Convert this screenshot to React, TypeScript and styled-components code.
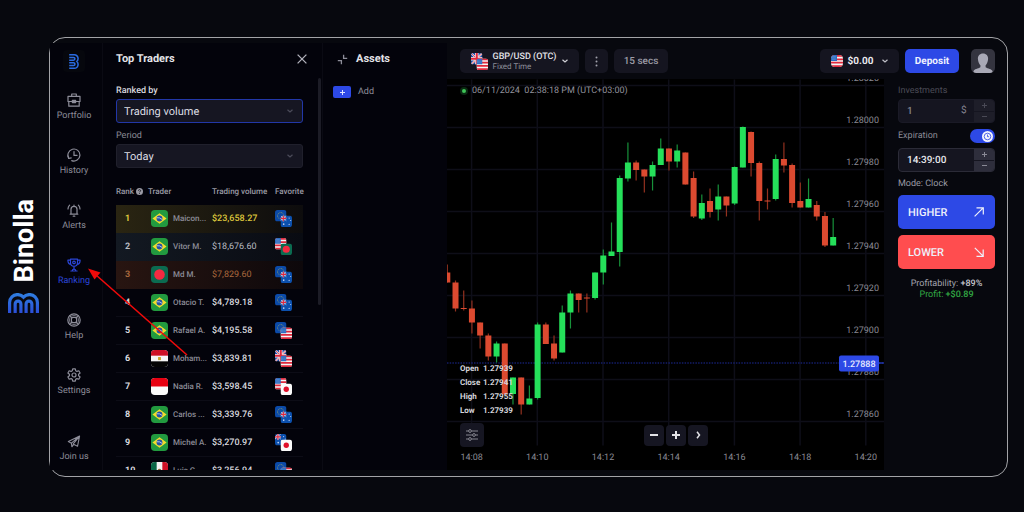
import React from 'react';
import styled, { createGlobalStyle, css } from 'styled-components';

const GlobalStyle = createGlobalStyle`
  * { box-sizing: border-box; }
  body {
    margin: 0;
    background: #07080e;
    color: #d9d9df;
    font-family: Roboto, "Liberation Sans", sans-serif;
    font-size: 9px;
    text-rendering: geometricPrecision;
  }
  button, input, select { font-family: inherit; margin: 0; text-rendering: inherit; }
  svg { display: block; }
`;

/* ---------- page frame ---------- */

const Page = styled.div`
  display: flex;
  height: 100vh;
  min-height: 400px;
  padding: 37px 16px 35px 0;
`;

const BrandRail = styled.aside`
  flex: none;
  width: 49px;
  display: flex;
  flex-direction: column;
  align-items: center;
  justify-content: center;
  gap: 10px;
  padding: 0 2px 2px 0;
`;

const BrandName = styled.div`
  writing-mode: vertical-rl;
  transform: rotate(180deg);
  font-size: 27px;
  line-height: 32px;
  font-weight: 700;
  color: #fff;
`;

const Frame = styled.div`
  position: relative;
  flex: 1;
  min-width: 0;
  display: flex;
  padding: 5px 0 6px;
  border: 1px solid #a2a3a7;
  border-radius: 16px;
`;

/* ---------- navigation ---------- */

const Nav = styled.nav`
  flex: none;
  width: 53px;
  display: flex;
  flex-direction: column;
  align-items: center;
  padding: 7px 4px 6px 0;
  border-right: 1px solid #0a0a13;
  background: #03030b;
`;

const LogoTile = styled.a`
  width: 22px;
  height: 22px;
  margin-bottom: 21px;
  display: grid;
  place-items: center;
  border-radius: 4px;
  background: #06070d;
`;

const NavLink = styled.a<{ $active?: boolean; $last?: boolean }>`
  display: flex;
  flex-direction: column;
  align-items: center;
  gap: 3px;
  height: 55px;
  color: ${(p) => (p.$active ? '#2b46d8' : '#8d8d99')};
  font-size: 9px;
  line-height: 13px;
  text-decoration: none;
  ${(p) => p.$last && css`margin-top: auto; height: 29px;`}
`;

/* ---------- traders panel ---------- */

const Traders = styled.section`
  flex: none;
  width: 220px;
  display: flex;
  flex-direction: column;
  background: #03030b;
  border-right: 1px solid #0a0a13;
`;

const PanelHead = styled.header`
  display: flex;
  align-items: center;
  justify-content: space-between;
  height: 32px;
  padding: 0 15px 0 13px;
`;

const PanelTitle = styled.h2`
  margin: 0;
  font-size: 11px;
  line-height: 16px;
  font-weight: 700;
  color: #e4e4e9;
`;

const IconButton = styled.button`
  display: grid;
  place-items: center;
  padding: 0;
  border: 0;
  background: none;
  color: #b2b2bb;
`;

const Scroller = styled.div`
  flex: 1;
  min-height: 0;
  display: flex;
  margin-top: 3px;
  overflow: hidden;
`;

const ScrollBody = styled.div`
  flex: 1;
  padding: 6px 15px 0 13px;
`;

const ScrollThumb = styled.div`
  width: 3px;
  height: 227px;
  margin-right: 1px;
  border-radius: 2px;
  background: #1c1c26;
`;

const FieldLabel = styled.label<{ $bright?: boolean; $dim?: boolean }>`
  display: block;
  font-size: 9px;
  line-height: 14px;
  font-weight: ${(p) => (p.$bright ? 500 : 400)};
  color: ${(p) => (p.$bright ? '#d8d8de' : p.$dim ? '#4b4b56' : '#8a8a95')};
`;

const SelectWrap = styled.div`
  display: grid;
  align-items: center;
  margin: 1px 0 6px;
  > * { grid-area: 1 / 1; }
  > svg { justify-self: end; margin-right: 10px; pointer-events: none; }
`;

const Select = styled.select<{ $focus?: boolean }>`
  appearance: none;
  width: 100%;
  height: 24px;
  padding: 0 7px;
  border: 1px solid ${(p) => (p.$focus ? '#2237a8' : '#20202c')};
  border-radius: 3px;
  background: #161622;
  color: #dcdce2;
  font-size: 11px;
`;

const Table = styled.table`
  width: 100%;
  margin-top: 9px;
  border-spacing: 0;
  table-layout: fixed;
`;

const Th = styled.th<{ $w?: number }>`
  height: 28px;
  padding: 0;
  ${(p) => p.$w && css`width: ${p.$w}px;`}
  font-size: 8px;
  font-weight: 500;
  text-align: left;
  white-space: nowrap;
  color: #9a9aa4;
  svg { display: inline-block; vertical-align: -1px; margin-left: 2px; }
`;

type Tone = 'gold' | 'silver' | 'bronze' | 'plain';
const toneRow = {
  gold: 'linear-gradient(90deg, #2a2512, #0d0c0d)',
  silver: 'linear-gradient(90deg, #131922, #090b12)',
  bronze: 'linear-gradient(90deg, #281511, #0d080b)',
  plain: 'none',
};
const toneText = { gold: '#dcc63c', silver: '#b9bbc2', bronze: '#a9683d', plain: '#d9d9df' };

const Tr = styled.tr<{ $tone: Tone }>`
  height: 28px;
  background: ${(p) => toneRow[p.$tone]};
  td { border-bottom: 1px solid ${(p) => (p.$tone === 'plain' ? '#0c0c16' : 'transparent')}; }
`;

const Td = styled.td<{ $tone?: Tone; $rank?: boolean; $strong?: boolean }>`
  padding: 0 0 0 ${(p) => (p.$rank ? 9 : 0)}px;
  font-size: 9px;
  font-weight: ${(p) => (p.$rank ? 700 : p.$strong ? 500 : 400)};
  white-space: nowrap;
  color: ${(p) => (p.$tone ? toneText[p.$tone] : '#8c8c97')};
`;

const TraderName = styled.div`
  display: flex;
  align-items: center;
  gap: 5px;
  padding-left: 3px;
  font-size: 8px;
  font-weight: 500;
`;

/* ---------- assets panel ---------- */

const Assets = styled.section`
  flex: none;
  width: 124px;
  background: #03030b;
`;

const AssetsHead = styled(PanelHead)`
  justify-content: flex-start;
  gap: 8px;
  padding-left: 14px;
`;

const AddRow = styled.button`
  display: flex;
  align-items: center;
  gap: 7px;
  margin: 11px 0 0 10px;
  padding: 0;
  border: 0;
  background: none;
  color: #8d8d99;
  font-size: 9px;
`;

const AddBadge = styled.span`
  width: 18px;
  height: 12px;
  display: grid;
  place-items: center;
  border-radius: 2px;
  background: #2d49e6;
  color: #dfe3ff;
`;

/* ---------- trading area ---------- */

const Main = styled.main`
  flex: 1;
  min-width: 0;
  display: flex;
  flex-direction: column;
`;

const TopBar = styled.header`
  display: flex;
  align-items: center;
  gap: 6px;
  height: 36px;
  padding: 0 12px 0 13px;
`;

const Pill = styled.button<{ $primary?: boolean; $w: number }>`
  display: flex;
  align-items: center;
  justify-content: center;
  gap: 5px;
  width: ${(p) => p.$w}px;
  height: 24px;
  padding: 0;
  border: 0;
  border-radius: 5px;
  background: ${(p) => (p.$primary ? '#2d49e6' : '#151520')};
  color: ${(p) => (p.$primary ? '#f0f2ff' : '#9c9ca6')};
  font-size: 10px;
  font-weight: ${(p) => (p.$primary ? 700 : 500)};
`;

const PairText = styled.span`
  display: flex;
  flex-direction: column;
  text-align: left;
  font-size: 8px;
  line-height: 9px;
  font-weight: 400;
  margin-right: 1px;
  color: #8d8d99;
  strong { color: #e4e4e9; font-size: 9px; line-height: 10px; font-weight: 500; }
`;

const Amount = styled.strong`
  font-size: 10px;
  color: #e8e8ed;
  margin: 0 4px 0 0;
`;

const Spacer = styled.div`
  flex: 1;
`;

const Avatar = styled.button`
  width: 24px;
  height: 24px;
  margin-left: 6px;
  padding: 0;
  border: 0;
  border-radius: 5px;
  overflow: hidden;
  background: #34343f;
`;

const Workspace = styled.div`
  flex: 1;
  min-height: 0;
  display: flex;
`;

const ChartArea = styled.div`
  position: relative;
  flex: 1;
  min-width: 0;
  background: #000;
  > svg { width: 100%; height: 100%; }
  svg text { font-family: Roboto, sans-serif; font-size: 9px; }
`;

const Clock = styled.div`
  position: absolute;
  top: 5px;
  left: 13px;
  display: flex;
  align-items: center;
  gap: 4px;
  font-size: 9px;
  line-height: 14px;
  color: #92929c;
`;

const LiveDot = styled.i`
  width: 8px;
  height: 8px;
  border: 2px solid #0a2a12;
  border-radius: 50%;
  background: #3fc457;
`;

const Ohlc = styled.dl`
  position: absolute;
  left: 13px;
  bottom: 52px;
  display: grid;
  grid-template-columns: 23px auto;
  margin: 0;
  font-size: 8px;
  line-height: 14px;
  font-weight: 700;
  color: #d4d4da;
  dd { margin: 0; }
`;

const ChartTools = styled.div`
  position: absolute;
  left: 13px;
  right: 176px;
  bottom: 23px;
  display: flex;
  align-items: center;
  gap: 2px;
`;

const ToolButton = styled.button<{ $big?: boolean }>`
  width: ${(p) => (p.$big ? 24 : 20)}px;
  height: ${(p) => (p.$big ? 24 : 21)}px;
  display: grid;
  place-items: center;
  padding: 0;
  border: 0;
  border-radius: 4px;
  background: #161622;
  color: ${(p) => (p.$big ? '#85858f' : '#e2e2e6')};
  ${(p) => p.$big && css`margin-right: auto;`}
`;

/* ---------- order panel ---------- */

const Order = styled.form`
  flex: none;
  width: 123px;
  padding: 5px 12px 0 14px;
`;

const Stepper = styled.div<{ $dim?: boolean }>`
  display: flex;
  height: 24px;
  margin: 1px 0 6px;
  border: 1px solid ${(p) => (p.$dim ? '#1a1a26' : '#2b2b37')};
  border-radius: 4px;
  overflow: hidden;
  background: #151520;
  color: ${(p) => (p.$dim ? '#82828d' : '#e8e8ed')};
`;

const StepInput = styled.input`
  flex: 1;
  min-width: 0;
  padding: 0 0 0 8px;
  border: 0;
  background: none;
  color: inherit;
  font-size: 10px;
  font-weight: 500;
`;

const Unit = styled.span`
  width: 13px;
  font-size: 10px;
  line-height: 21px;
`;

const Steps = styled.div<{ $dim?: boolean }>`
  width: 20px;
  display: grid;
  gap: 1px;
  button {
    display: grid;
    place-items: center;
    padding: 0;
    border: 0;
    background: ${(p) => (p.$dim ? '#1e1e29' : '#2e2e3c')};
    color: ${(p) => (p.$dim ? '#4a4a56' : '#8a8a96')};
  }
`;

const ToggleRow = styled.div`
  display: flex;
  align-items: center;
  justify-content: space-between;
  height: 14px;
  margin-bottom: 5px;
`;

const Toggle = styled.div`
  display: grid;
  width: 25px;
  height: 14px;
  align-items: center;
  border-radius: 7px;
  background: #2d49e6;
  > * { grid-area: 1 / 1; }
  > svg { justify-self: end; margin-right: 2px; pointer-events: none; }
  input { appearance: none; width: 25px; height: 14px; margin: 0; }
`;

const Mode = styled.p`
  margin: 0 0 5px;
  font-size: 9px;
  line-height: 12px;
  color: #9a9aa4;
`;

const TradeButton = styled.button<{ $down?: boolean }>`
  display: flex;
  align-items: center;
  justify-content: space-between;
  width: 100%;
  height: 34px;
  margin-bottom: 6px;
  padding: 0 11px 0 10px;
  border: 0;
  border-radius: 5px;
  background: ${(p) => (p.$down ? '#ff4d4f' : '#2d49e6')};
  color: #eef0fb;
  font-size: 11px;
  font-weight: 500;
`;

const Outcomes = styled.div`
  padding-top: 4px;
`;

const Outcome = styled.p<{ $profit?: boolean }>`
  margin: 0;
  font-size: 9px;
  line-height: 11px;
  text-align: center;
  white-space: nowrap;
  color: ${(p) => (p.$profit ? '#32a844' : '#a2a2ac')};
  b { font-weight: 500; color: ${(p) => (p.$profit ? 'inherit' : '#c6c6ce')}; }
`;

const Pointer = styled.svg`
  position: absolute;
  left: 38px;
  top: 228px;
  pointer-events: none;
`;

/* ---------- drawings ---------- */

type Country = 'BR' | 'BD' | 'EG' | 'ID' | 'MX' | 'EU' | 'AU' | 'US' | 'GB' | 'JP';

const art: Record<Country, React.ReactNode> = {
  BR: (
    <>
      <rect width="18" height="18" fill="#229a3f" />
      <path d="M9 3.500 16.500 9 9 14.500 1.500 9z" fill="#f2dc2e" />
      <circle cx="9" cy="9" r="3.100" fill="#2450a4" />
      <path d="M6.200 8.200q3-.6 5.600 1.800" stroke="#dfe8f5" strokeWidth=".8" fill="none" />
    </>
  ),
  BD: (
    <>
      <rect width="18" height="18" fill="#0b6b50" />
      <circle cx="9" cy="9" r="5.600" fill="#f42a41" />
    </>
  ),
  EG: (
    <>
      <rect width="18" height="18" fill="#f5f5f5" />
      <rect width="18" height="6" fill="#ce1126" />
      <rect y="12" width="18" height="6" fill="#050505" />
      <rect x="7.500" y="7.500" width="3" height="3.200" fill="#c9a227" />
    </>
  ),
  ID: (
    <>
      <rect width="18" height="18" fill="#fafafa" />
      <rect width="18" height="9" fill="#e70011" />
    </>
  ),
  MX: (
    <>
      <rect width="18" height="18" fill="#f3f3f3" />
      <rect width="6" height="18" fill="#0a6847" />
      <rect x="12" width="6" height="18" fill="#ce1126" />
      <circle cx="9" cy="9" r="1.800" fill="#8c6a3a" />
    </>
  ),
  EU: (
    <>
      <rect width="18" height="18" fill="#0b4aa8" />
      <circle cx="9" cy="9" r="5" fill="none" stroke="#a9ab5c" strokeWidth="1.300" strokeDasharray="1.300 1.320" />
    </>
  ),
  AU: (
    <>
      <rect width="18" height="18" fill="#0c50ad" />
      <path d="M0 0 9 8M9 0 0 8" stroke="#d5dcee" strokeWidth="1.400" />
      <path d="M4.500 0v9M0 4.500h9" stroke="#e6e6ee" strokeWidth="2.600" />
      <path d="M4.500 0v9M0 4.500h9" stroke="#e0263c" strokeWidth="1.700" />
      <circle cx="5" cy="13.500" r="1.300" fill="#c8d6f2" />
      <circle cx="13.500" cy="4" r=".9" fill="#c8d6f2" />
      <circle cx="13.500" cy="14" r=".9" fill="#c8d6f2" />
      <circle cx="16" cy="8" r=".8" fill="#c8d6f2" />
    </>
  ),
  US: (
    <>
      <rect width="18" height="18" fill="#f5f5f5" />
      <path d="M0 1.300h18M0 6.400h18M0 11.600h18M0 16.700h18" stroke="#e0293d" strokeWidth="2.600" />
      <rect width="9" height="9" fill="#2c6cc0" />
      <path d="M1.500 2.500h6M1.500 4.500h6M1.500 6.500h6" stroke="#bcd0ee" strokeWidth=".7" strokeDasharray=".8 1" />
    </>
  ),
  GB: (
    <>
      <rect width="18" height="18" fill="#1b4aa5" />
      <path d="M0 0 18 18M18 0 0 18" stroke="#f2f2f2" strokeWidth="3" />
      <path d="M0 0 18 18M18 0 0 18" stroke="#e0263c" strokeWidth="1.200" />
      <path d="M9 0v18M0 9h18" stroke="#f2f2f2" strokeWidth="5.500" />
      <path d="M9 0v18M0 9h18" stroke="#e0263c" strokeWidth="3.200" />
    </>
  ),
  JP: (
    <>
      <rect width="18" height="18" fill="#fafafa" />
      <circle cx="9" cy="9" r="4.200" fill="#e0102b" />
    </>
  ),
};

const FlagArt = ({ code, round }: { code: Country; round?: boolean }) => (
  <g clipPath={round ? 'url(#flag-round)' : 'url(#flag-tile)'}>{art[code]}</g>
);

const Flag = ({ code, size }: { code: Country; size: number }) => (
  <svg width={size} height={size} viewBox="0 0 18 18" aria-hidden="true">
    <FlagArt code={code} />
  </svg>
);

const FlagPair = ({ codes, size = 17 }: { codes: [Country, Country]; size?: number }) => (
  <svg width={size} height={size} viewBox="0 0 17 17" aria-hidden="true">
    <svg width="11.500" height="11.500" viewBox="0 0 18 18">
      <FlagArt code={codes[0]} />
    </svg>
    <svg x="5.500" y="5.500" width="11.500" height="11.500" viewBox="0 0 18 18">
      <FlagArt code={codes[1]} />
    </svg>
  </svg>
);

const SharedDefs = () => (
  <svg width="0" height="0" style={{ position: 'absolute' }} aria-hidden="true">
    <defs>
      <clipPath id="flag-tile">
        <rect width="18" height="18" rx="4" />
      </clipPath>
      <clipPath id="flag-round">
        <rect width="18" height="18" rx="6" />
      </clipPath>
      <linearGradient id="brand-blue" x1="0" y1="0" x2="0" y2="20" gradientUnits="userSpaceOnUse">
        <stop offset="0" stopColor="#2f7fe0" />
        <stop offset="1" stopColor="#2b4fd8" />
      </linearGradient>
    </defs>
  </svg>
);

const brandStrokes = (
  <>
    <path d="M1.600 20V9.500a8 8 0 0 1 8-8c2.500 0 4.600 1 6 2.600 1.400-1.600 3.500-2.600 6-2.600a8 8 0 0 1 8 8V20" />
    <path d="M7.200 20v-9a2.900 2.900 0 0 1 5.800 0v9" />
    <path d="M18.200 20v-9a2.900 2.900 0 0 1 5.800 0v9" />
  </>
);

const BrandMark = () => (
  <svg width="31" height="20" viewBox="0 0 31.200 20" fill="none" stroke="url(#brand-blue)" strokeWidth="3.200">
    {brandStrokes}
  </svg>
);

const BrandTileMark = () => (
  <svg width="10" height="15" viewBox="0 0 20 31.200" fill="none" stroke="#2a6be0" strokeWidth="3.200">
    <g transform="translate(20 0) rotate(90)">{brandStrokes}</g>
  </svg>
);

const Chevron = ({ color, size = 6 }: { color: string; size?: number }) => (
  <svg width={size} height={size} viewBox="0 0 6 6" fill="none" stroke={color} strokeWidth="1.200">
    <path d="m.5 1.800 2.500 2.200 2.500-2.200" />
  </svg>
);

const Plus = ({ size, width = 1 }: { size: number; width?: number }) => (
  <svg width={size} height={size} viewBox="0 0 10 10" stroke="currentColor" strokeWidth={(width * 10) / size}>
    <path d="M5 0v10M0 5h10" />
  </svg>
);

const Minus = ({ size, width = 1 }: { size: number; width?: number }) => (
  <svg width={size} height={size} viewBox="0 0 10 10" stroke="currentColor" strokeWidth={(width * 10) / size}>
    <path d="M0 5h10" />
  </svg>
);

const NavGlyph = ({ children }: { children: React.ReactNode }) => (
  <svg width="14" height="14" viewBox="0 0 14 14" fill="none" stroke="currentColor" strokeWidth="1.200" strokeLinejoin="round" strokeLinecap="round">
    {children}
  </svg>
);

const glyphs = {
  portfolio: (
    <>
      <path d="M1 3.300h12v5.200H1zM1.800 8.500v4.700h10.400V8.500M4.700 3.300V1h4.600v2.300" />
      <rect x="5.400" y="7.300" width="3.200" height="2.300" />
    </>
  ),
  history: (
    <>
      <path d="M1.900 10.300A6 6 0 1 1 4.700 12.600" />
      <path d="M.9 7.900l.8 2.600 2.500-.7M7 3.600V7.400h3" />
    </>
  ),
  alerts: (
    <>
      <path d="M3.200 11.200h7.600M4 11V6.300a3 3 0 0 1 6 0V11M6.200 13.200h1.600M7 3.300V2" />
      <path d="M2.600 2.200C1.500 3.300 1 4.600 1 6M11.400 2.200C12.500 3.300 13 4.600 13 6" />
    </>
  ),
  ranking: (
    <>
      <path d="M3.500 1.100h7v3.700a3.500 3.500 0 0 1-7 0zM3.500 2.200H.9c0 2.600 1 4 3.200 4.300M10.500 2.200h2.600c0 2.600-1 4-3.200 4.300M7 8.400v2.700M3.900 13h6.200M5.200 13c0-1.200.7-1.900 1.800-1.900s1.800.7 1.800 1.900" />
      <circle cx="7" cy="4.400" r="1.300" />
    </>
  ),
  help: (
    <>
      <circle cx="7" cy="7" r="6.200" />
      <rect x="4.400" y="4.400" width="5.200" height="5.200" rx="1.600" />
      <path d="M2.700 2.700 4.900 4.900M11.300 2.700 9.100 4.900M2.700 11.300 4.900 9.100M11.300 11.300 9.100 9.100" />
      <path d="M4.600 2.900q2.400-1 4.800 0M4.600 11.100q2.400 1 4.800 0M2.900 4.600q-1 2.400 0 4.800M11.100 4.600q1 2.400 0 4.800" strokeWidth=".8" />
    </>
  ),
  settings: (
    <>
      <path d="M5.700.8h2.600l.4 1.900 1.200.7 1.900-.6 1.300 2.200-1.500 1.300v1.400l1.500 1.300-1.300 2.200-1.900-.6-1.200.7-.4 1.900H5.700l-.4-1.900-1.200-.7-1.900.6L.9 9l1.500-1.300V6.300L.9 5l1.300-2.200 1.900.6 1.200-.7z" />
      <circle cx="7" cy="7" r="2" />
    </>
  ),
  join: (
    <path d="M13 1.200.9 7l3.300 1.800L13 1.200 6 9.800l4.800 2.300zM4.200 8.800l.5 3.900L6.600 10.200" />
  ),
};

/* ---------- data ---------- */

const navItems: { key: keyof typeof glyphs; label: string }[] = [
  { key: 'portfolio', label: 'Portfolio' },
  { key: 'history', label: 'History' },
  { key: 'alerts', label: 'Alerts' },
  { key: 'ranking', label: 'Ranking' },
  { key: 'help', label: 'Help' },
  { key: 'settings', label: 'Settings' },
];

const traders: { flag: Country; name: string; volume: string; pair: [Country, Country] }[] = [
  { flag: 'BR', name: 'Maicon...', volume: '$23,658.27', pair: ['EU', 'AU'] },
  { flag: 'BR', name: 'Vitor M.', volume: '$18,676.60', pair: ['US', 'BD'] },
  { flag: 'BD', name: 'Md M.', volume: '$7,829.60', pair: ['EU', 'AU'] },
  { flag: 'BR', name: 'Otacio T.', volume: '$4,789.18', pair: ['EU', 'AU'] },
  { flag: 'BR', name: 'Rafael A.', volume: '$4,195.58', pair: ['EU', 'US'] },
  { flag: 'EG', name: 'Moham...', volume: '$3,839.81', pair: ['GB', 'US'] },
  { flag: 'ID', name: 'Nadia R.', volume: '$3,598.45', pair: ['US', 'JP'] },
  { flag: 'BR', name: 'Carlos ...', volume: '$3,339.76', pair: ['EU', 'AU'] },
  { flag: 'BR', name: 'Michel A.', volume: '$3,270.97', pair: ['AU', 'JP'] },
  { flag: 'MX', name: 'Luis G.', volume: '$3,256.94', pair: ['EU', 'US'] },
];
const tones: Tone[] = ['gold', 'silver', 'bronze'];

/* direction, body top, body bottom, wick top, wick bottom */
const candles: ['u' | 'd', number, number, number, number][] = [
  ['d', 193, 203, 185, 203], ['d', 203, 229, 201, 232], ['d', 228.5, 229.5, 211, 231], ['d', 229, 243, 221, 254],
  ['d', 243, 256, 243, 269], ['d', 256, 277, 254, 281], ['u', 264, 277, 262, 283], ['d', 264, 315, 264, 315],
  ['u', 298, 314.5, 298, 325], ['d', 298, 325, 298, 335], ['u', 319, 325, 306, 325], ['u', 245, 318.5, 243, 320],
  ['d', 245, 264.5, 243, 264.5], ['d', 264, 279, 256, 281], ['u', 233, 273, 226, 273], ['u', 214, 233, 211, 249],
  ['d', 214, 220.5, 214, 233], ['d', 218, 219, 214, 233], ['u', 193, 218.5, 193, 220], ['u', 176, 193, 170, 205],
  ['u', 172, 176.5, 143, 176], ['u', 98.5, 172.5, 96, 187], ['u', 83, 99, 63, 102], ['d', 83, 90.5, 81, 101],
  ['d', 90, 97, 90, 113], ['u', 85.5, 97, 82, 111], ['u', 69, 85.5, 59, 85], ['d', 69, 82, 69, 91],
  ['u', 71, 82, 65, 88], ['d', 73, 105, 73, 105], ['d', 98.5, 137, 92, 138.5], ['u', 123.5, 139, 115, 140.5],
  ['d', 121.5, 132.5, 109, 138], ['u', 117, 130, 105, 141], ['d', 117, 126, 117, 137], ['u', 87.5, 124, 87, 125.5],
  ['u', 47.5, 88, 47, 88], ['d', 52.5, 83.5, 52, 97], ['d', 83.5, 121.5, 82, 141], ['d', 121, 122, 109, 130],
  ['u', 79.5, 119.5, 75, 121], ['d', 79.5, 86, 63, 93], ['d', 85.5, 123.5, 84, 128], ['d', 121.5, 128, 103, 128],
  ['u', 119.5, 128, 99, 128], ['d', 125.5, 137, 121.5, 141], ['d', 136.5, 166, 132.5, 167.5], ['u', 157.5, 166, 138.5, 166],
];

const prices = ['1.28020', '1.28000', '1.27980', '1.27960', '1.27940', '1.27920', '1.27900', '1.27880', '1.27860'];
const times = ['14:08', '14:10', '14:12', '14:14', '14:16', '14:18', '14:20'];

const PriceChart = () => (
  <svg viewBox="0 0 437 390" role="img" aria-label="GBP/USD candles">
    <g stroke="#0e0e18" strokeWidth="1.500">
      {prices.map((p, i) => (
        <path key={p} d={`M0 ${6 + i * 42}H437`} />
      ))}
      {times.map((t, i) => (
        <path key={t} d={`M${24.6 + i * 65.7} 0V366`} />
      ))}
    </g>
    <path d="M0 283.500H437" stroke="#1c2a9a" strokeDasharray="1.500 1.200" />
    {candles.map(([dir, top, bottom, high, low], i) => {
      const x = 0.3 + i * 8.21;
      const fill = dir === 'u' ? '#25e05a' : '#dc4a30';
      return (
        <g key={i}>
          <path d={`M${x} ${high}V${low}`} stroke={dir === 'u' ? '#17913a' : '#93311f'} strokeWidth="1.200" />
          <rect x={x - 3} y={top} width="6" height={bottom - top} fill={fill} />
        </g>
      );
    })}
    <g fill="#8a8a94" textAnchor="end">
      {prices.map((p, i) => (
        <text key={p} x="432" y={1 + i * 42}>{p}</text>
      ))}
    </g>
    <g fill="#8a8a94" textAnchor="middle">
      {times.map((t, i) => (
        <text key={t} x={24.6 + i * 65.7} y="380">{t}</text>
      ))}
    </g>
    <rect x="392" y="276" width="40" height="16" rx="2" fill="#2d49e6" />
    <path d="M432 283.500h5" stroke="#2d49e6" />
    <text x="412" y="287" textAnchor="middle" fontWeight="500" fill="#e6eaff">1.27888</text>
  </svg>
);

export default function App() {
  return (
    <Page>
      <GlobalStyle />
      <SharedDefs />
      <BrandRail>
        <BrandName>Binolla</BrandName>
        <BrandMark />
      </BrandRail>

      <Frame>
        <Nav aria-label="Main">
          <LogoTile href="#" aria-label="Home">
            <BrandTileMark />
          </LogoTile>
          {navItems.map((item) => (
            <NavLink key={item.key} href="#" $active={item.key === 'ranking'}>
              <NavGlyph>{glyphs[item.key]}</NavGlyph>
              {item.label}
            </NavLink>
          ))}
          <NavLink href="#" $last>
            <NavGlyph>{glyphs.join}</NavGlyph>
            Join us
          </NavLink>
        </Nav>

        <Traders>
          <PanelHead>
            <PanelTitle>Top Traders</PanelTitle>
            <IconButton aria-label="Close">
              <svg width="10" height="10" viewBox="0 0 10 10" stroke="currentColor" strokeWidth="1.300">
                <path d="m.6.6 8.800 8.800M9.400.6.6 9.400" />
              </svg>
            </IconButton>
          </PanelHead>
          <Scroller>
            <ScrollBody>
              <FieldLabel htmlFor="ranked" $bright>Ranked by</FieldLabel>
              <SelectWrap>
                <Select id="ranked" $focus>
                  <option>Trading volume</option>
                </Select>
                <Chevron color="#4c4c5a" />
              </SelectWrap>
              <FieldLabel htmlFor="period">Period</FieldLabel>
              <SelectWrap>
                <Select id="period">
                  <option>Today</option>
                </Select>
                <Chevron color="#4c4c5a" />
              </SelectWrap>
              <Table>
                <thead>
                  <tr>
                    <Th $w={32}>
                      Rank
                      <svg width="7" height="7" viewBox="0 0 7 7" aria-hidden="true">
                        <circle cx="3.500" cy="3.500" r="3.500" fill="#9a9aa4" />
                        <path d="M2.400 2.700c0-1.400 2.200-1.400 2.200 0 0 .8-1.100.8-1.100 1.600M3.500 5v.8" stroke="#08080f" strokeWidth=".8" fill="none" />
                      </svg>
                    </Th>
                    <Th $w={64}>Trader</Th>
                    <Th $w={63}>Trading volume</Th>
                    <Th>Favorite</Th>
                  </tr>
                </thead>
                <tbody>
                  {traders.map((t, i) => {
                    const tone = tones[i] ?? 'plain';
                    return (
                      <Tr key={t.name} $tone={tone}>
                        <Td $rank $tone={tone}>{i + 1}</Td>
                        <Td>
                          <TraderName>
                            <Flag code={t.flag} size={17} />
                            {t.name}
                          </TraderName>
                        </Td>
                        <Td $tone={tone} $strong={i !== 1 && i !== 2}>{t.volume}</Td>
                        <Td>
                          <FlagPair codes={t.pair} />
                        </Td>
                      </Tr>
                    );
                  })}
                </tbody>
              </Table>
            </ScrollBody>
            <ScrollThumb />
          </Scroller>
        </Traders>

        <Assets>
          <AssetsHead>
            <svg width="11" height="11" viewBox="0 0 11 11" fill="none" stroke="#8d8d99" strokeWidth="1.300" aria-hidden="true">
              <path d="M6.600.8v3.600h3.600M.8 6.600h3.600v3.600" />
            </svg>
            <PanelTitle>Assets</PanelTitle>
          </AssetsHead>
          <AddRow>
            <AddBadge>
              <Plus size={5} />
            </AddBadge>
            Add
          </AddRow>
        </Assets>

        <Main>
          <TopBar>
            <Pill $w={119}>
              <FlagPair codes={['GB', 'US']} />
              <PairText>
                <strong>GBP/USD (OTC)</strong>
                Fixed Time
              </PairText>
              <Chevron color="#d0d0d6" />
            </Pill>
            <Pill $w={23} aria-label="More">
              <svg width="3" height="11" viewBox="0 0 3 11" fill="#a2a2ac">
                <circle cx="1.500" cy="1.500" r="1" />
                <circle cx="1.500" cy="5.500" r="1" />
                <circle cx="1.500" cy="9.500" r="1" />
              </svg>
            </Pill>
            <Pill $w={54}>15 secs</Pill>
            <Spacer />
            <Pill $w={79}>
              <svg width="12" height="12" viewBox="0 0 18 18" aria-hidden="true">
                <FlagArt code="US" round />
              </svg>
              <Amount>$0.00</Amount>
              <Chevron color="#c0c0c8" />
            </Pill>
            <Pill $w={54} $primary>Deposit</Pill>
            <Avatar aria-label="Account">
              <svg width="24" height="24" viewBox="0 0 24 24" fill="#a9a9b6">
                <path d="M12 4.500c3.300 0 5.300 2.300 5.100 5.600-.2 3-1.300 5-2.500 6.200v1.600c.3 1.300 5.400 1.500 6.600 3.600.4.800.5 1.500.5 2.500H2.300c0-1 .1-1.700.5-2.500 1.200-2.100 6.300-2.300 6.600-3.600v-1.600c-1.200-1.200-2.300-3.200-2.500-6.200C6.700 6.800 8.700 4.500 12 4.500z" />
              </svg>
            </Avatar>
          </TopBar>

          <Workspace>
            <ChartArea>
              <PriceChart />
              <Clock>
                <LiveDot />
                06/11/2024&nbsp; 02:38:18 PM (UTC+03:00)
              </Clock>
              <Ohlc>
                <dt>Open</dt><dd>1.27939</dd>
                <dt>Close</dt><dd>1.27941</dd>
                <dt>High</dt><dd>1.27955</dd>
                <dt>Low</dt><dd>1.27939</dd>
              </Ohlc>
              <ChartTools>
                <ToolButton $big aria-label="Indicators">
                  <svg width="12" height="12" viewBox="0 0 12 12" fill="none" stroke="currentColor" strokeWidth="1">
                    <path d="M0 2h2.500M5.500 2H12M0 6h6.500M9.500 6H12M0 10h2.500M5.500 10H12" />
                    <circle cx="4" cy="2" r="1.400" />
                    <circle cx="8" cy="6" r="1.400" />
                    <circle cx="4" cy="10" r="1.400" />
                  </svg>
                </ToolButton>
                <ToolButton aria-label="Zoom out"><Minus size={8} width={2} /></ToolButton>
                <ToolButton aria-label="Zoom in"><Plus size={8} width={2} /></ToolButton>
                <ToolButton aria-label="Forward">
                  <svg width="5" height="8" viewBox="0 0 5 8" fill="none" stroke="currentColor" strokeWidth="1.500">
                    <path d="m1 .8 2.500 3.200L1 7.200" />
                  </svg>
                </ToolButton>
              </ChartTools>
            </ChartArea>

            <Order onSubmit={(e) => e.preventDefault()}>
              <FieldLabel htmlFor="investment" $dim>Investments</FieldLabel>
              <Stepper $dim>
                <StepInput id="investment" defaultValue="1" />
                <Unit>$</Unit>
                <Steps $dim>
                  <button type="button" aria-label="Increase"><Plus size={5} /></button>
                  <button type="button" aria-label="Decrease"><Minus size={5} /></button>
                </Steps>
              </Stepper>
              <ToggleRow>
                <FieldLabel htmlFor="clock">Expiration</FieldLabel>
                <Toggle>
                  <input id="clock" type="checkbox" role="switch" defaultChecked />
                  <svg width="11" height="11" viewBox="0 0 11 11" fill="none" stroke="#2d49e6" strokeWidth=".8">
                    <circle cx="5.500" cy="5.500" r="5.500" fill="#f2f3fb" stroke="none" />
                    <circle cx="5.500" cy="5.500" r="3.300" />
                    <path d="M5.500 3.500v2.200h1.600" />
                  </svg>
                </Toggle>
              </ToggleRow>
              <Stepper>
                <StepInput aria-label="Expiration time" defaultValue="14:39:00" />
                <Steps>
                  <button type="button" aria-label="Later"><Plus size={5} /></button>
                  <button type="button" aria-label="Earlier"><Minus size={5} /></button>
                </Steps>
              </Stepper>
              <Mode>Mode: Clock</Mode>
              <TradeButton type="button">
                HIGHER
                <svg width="10" height="10" viewBox="0 0 10 10" fill="none" stroke="currentColor" strokeWidth="1.200">
                  <path d="M.6 9.400 9.200.8M2.500.8h6.800v6.800" />
                </svg>
              </TradeButton>
              <TradeButton type="button" $down>
                LOWER
                <svg width="10" height="10" viewBox="0 0 10 10" fill="none" stroke="currentColor" strokeWidth="1.200">
                  <path d="m.8.8 8.400 8.400M9.200 2.500v6.800H2.500" />
                </svg>
              </TradeButton>
              <Outcomes>
                <Outcome>Profitability: <b>+89%</b></Outcome>
                <Outcome $profit>Profit: <b>+$0.89</b></Outcome>
              </Outcomes>
            </Order>
          </Workspace>
        </Main>

        <Pointer width="104" height="94" viewBox="0 0 104 94" aria-hidden="true">
          <path d="M99 89 8 9" stroke="#f00a0a" strokeWidth="1.600" />
          <path d="M0 2.500 12.500 6.500 6.500 13.500z" fill="#f00a0a" />
        </Pointer>
      </Frame>
    </Page>
  );
}
